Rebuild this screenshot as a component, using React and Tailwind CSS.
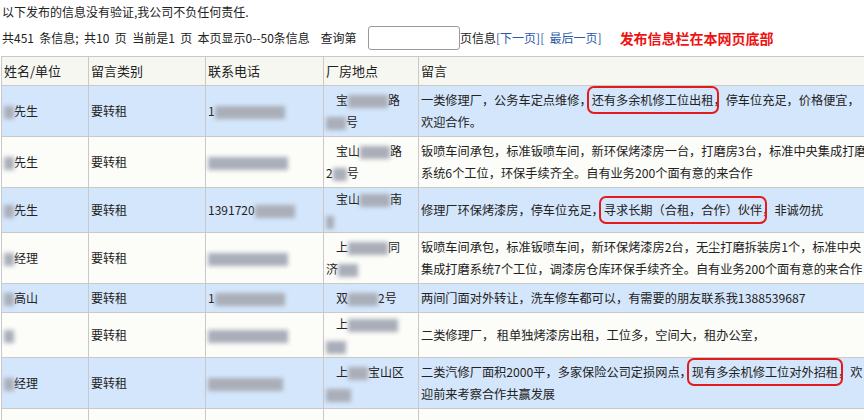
import React from 'react'

const Blur = ({ w, pre = '', post = '' }) => (
  <span className="whitespace-nowrap">
    {pre}
    <span className="inline-block h-[13px] align-middle bg-[#a9aeb8] blur-[2px]" style={{ width: w }} />
    {post}
  </span>
)

const Box = ({ children }) => (
  <span className="outline-2 outline-[#e31b1b] rounded-[2px] outline-offset-[3px]">{children}</span>
)

const rows = [
  { name: <Blur w={10} post="先生" />, phone: <Blur w={70} pre="1" />, addr: [<Blur w={40} pre="宝" post="路" />, <Blur w={20} post="号" />],
    msg: <>一类修理厂，公务车定点维修，<Box>还有多余机修工位出租</Box>，停车位充足，价格便宜，欢迎合作。</>, blue: true },
  { name: <Blur w={10} post="先生" />, phone: <Blur w={80} />, addr: [<Blur w={30} pre="宝山" post="路" />, <Blur w={14} pre="2" post="号" />],
    msg: '钣喷车间承包，标准钣喷车间，新环保烤漆房一台，打磨房3台，标准中央集成打磨系统6个工位，环保手续齐全。自有业务200个面有意的来合作' },
  { name: <Blur w={10} post="先生" />, phone: <Blur w={40} pre="1391720" />, addr: [<Blur w={30} pre="宝山" post="南" />, <Blur w={8} />],
    msg: <>修理厂环保烤漆房，停车位充足，<Box>寻求长期（合租，合作）伙伴</Box>，非诚勿扰</>, blue: true },
  { name: <Blur w={10} post="经理" />, phone: <Blur w={80} />, addr: [<Blur w={40} pre="上" post="同" />, <Blur w={20} pre="济" />],
    msg: '钣喷车间承包，标准钣喷车间，新环保烤漆房2台，无尘打磨拆装房1个，标准中央集成打磨系统7个工位，调漆房仓库环保手续齐全。自有业务200个面有意的来合作' },
  { name: <Blur w={10} post="高山" />, phone: <Blur w={70} pre="1" />, addr: [<Blur w={30} pre="双" post="2号" />],
    msg: '两间门面对外转让，洗车修车都可以，有需要的朋友联系我1388539687', blue: true },
  { name: <Blur w={10} />, phone: <Blur w={80} />, addr: [<Blur w={50} pre="上" />, <Blur w={20} />],
    msg: '二类修理厂， 租单独烤漆房出租，工位多，空间大，租办公室，' },
  { name: <Blur w={10} post="经理" />, phone: <Blur w={75} />, addr: [<Blur w={20} pre="上" post="宝山区" />, <Blur w={25} />],
    msg: <>二类汽修厂面积2000平，多家保险公司定损网点，<Box>现有多余机修工位对外招租</Box>，欢迎前来考察合作共赢发展</>, blue: true },
  { name: '', phone: '', addr: [''], msg: '' },
]

export default function App() {
  return (
    <div className="w-[864px] h-[420px] overflow-hidden bg-white text-[12px] text-[#222]" style={{ fontFamily: '"Noto Sans CJK SC", "Noto Sans", sans-serif' }}>
      <div className="px-[2px] pt-[3px] leading-[18px]">以下发布的信息没有验证,我公司不负任何责任.</div>
      <div className="flex items-center px-[2px] h-[30px] mt-[2px] whitespace-pre">
        <span>共451  条信息;  共10  页  当前是1  页  本页显示0--50条信息    查询第  </span>
        <span className="inline-block w-[92px] h-[24px] border border-[#999] rounded-[3px] ml-[6px]" />
        <span>页信息</span>
        <span className="text-[#2a5aa8]">[下一页][  最后一页]</span>
        <span className="ml-[18px] text-[#ee1111] font-bold text-[14px]">发布信息栏在本网页底部</span>
      </div>
      <table className="mt-[3px] ml-[1px] border-collapse table-fixed w-[880px] border-l border-[#555]">
        <colgroup>
          <col className="w-[87px]" /><col className="w-[117px]" /><col className="w-[118px]" /><col className="w-[95px]" /><col className="w-[463px]" />
        </colgroup>
        <thead>
          <tr className="h-[29px] bg-[#f7f7f2] text-[13px]">
            {['姓名/单位', '留言类别', '联系电话', '厂房地点', '留言'].map((h) => (
              <td key={h} className="border border-[#c9c9c9] px-[2px] text-left">{h}</td>
            ))}
          </tr>
        </thead>
        <tbody>
          {rows.map((r, i) => (
            <tr key={i} className={r.blue ? 'bg-[#d4e6fb]' : 'bg-[#fcfcf9]'}>
              <td className="border border-[#c9c9c9] px-[2px] h-[26px]">{r.name}</td>
              <td className="border border-[#c9c9c9] px-[2px]">{i < 7 ? '要转租' : ''}</td>
              <td className="border border-[#c9c9c9] px-[2px]">{r.phone}</td>
              <td className="border border-[#c9c9c9] px-[2px] leading-[22px]">
                {r.addr.map((a, j) => <div key={j} className={j === 0 ? 'pl-[10px]' : ''}>{a}</div>)}
              </td>
              <td className="border border-[#c9c9c9] px-[2px] py-[3px] leading-[22px] pr-[14px] text-[12.2px]">{r.msg}</td>
            </tr>
          ))}
        </tbody>
      </table>
    </div>
  )
}
